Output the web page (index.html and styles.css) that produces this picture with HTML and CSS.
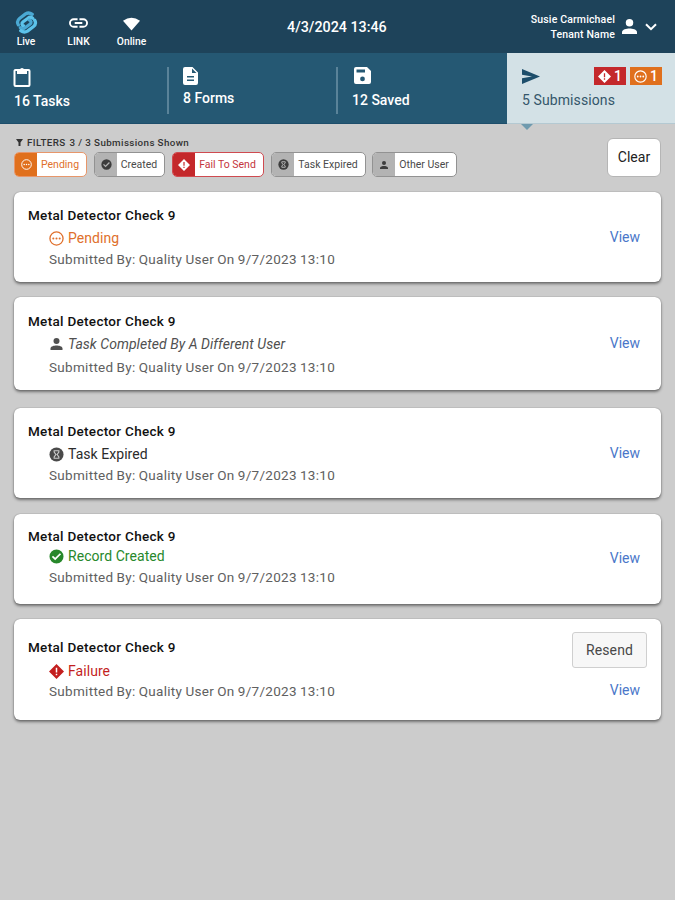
FILE: index.html
```html
<!DOCTYPE html>
<html lang="en">
<head>
    <meta charset="UTF-8">
    <title>Submissions</title>
    <link rel="stylesheet" href="styles.css">
</head>
<body>
<svg class="icon-defs" width="0" height="0">
    <symbol id="person" viewBox="0 0 16 16">
        <circle cx="8" cy="4" r="4"/>
        <path d="M0 16v-2c0-3 5-4 8-4s8 1 8 4v2z"/>
    </symbol>
    <symbol id="pending" viewBox="0 0 16 16">
        <circle cx="8" cy="8" r="7" fill="none" stroke="currentColor" stroke-width="1.4"/>
        <circle cx="4.6" cy="8" r="1.1"/>
        <circle cx="8" cy="8" r="1.1"/>
        <circle cx="11.4" cy="8" r="1.1"/>
    </symbol>
    <symbol id="check" viewBox="0 0 16 16">
        <path fill-rule="evenodd" d="M8 .5a7.500 7.500 0 1 0 0 15a7.500 7.500 0 1 0 0-15zM6.600 12L3 8.400l1.300-1.300 2.300 2.300 5-5 1.300 1.300z"/>
    </symbol>
    <symbol id="fail" viewBox="0 0 16 16">
        <path fill-rule="evenodd" d="M8 0l8 8-8 8-8-8zM7.200 4v5h1.600V4zM7.200 10.300v1.600h1.600v-1.600z"/>
    </symbol>
    <symbol id="expired" viewBox="0 0 16 16">
        <circle cx="8" cy="8" r="7.500"/>
        <path d="M5.500 4h5v1.500L8.700 8l1.800 2.500V12h-5v-1.500L7.300 8 5.500 5.500z" fill="none" stroke="#ccc" stroke-width="1.200"/>
    </symbol>
</svg>

<header class="top-bar">
    <div class="status-item live">
        <svg class="logo line-icon" viewBox="0 0 24 24" stroke-width="3.400" stroke-linejoin="round" stroke-linecap="round">
            <path d="M3.500 14.500C2 12 2.500 9.500 5 7.500l6-4.500c2.500-1.500 5-1 7 .5" stroke="#4aa9d4"/>
            <path d="M18.500 7.500c-2-1.500-3.500-1.200-5 0l-5 3.700c-2 1.500-1.500 4 .5 4.300" stroke="#5cc3ea"/>
            <path d="M5.500 17.500c2 1.500 3.500 1.200 5 0l5-3.700c2-1.500 1.500-4-.5-4.300" stroke="#4aa9d4"/>
            <path d="M20.500 9.500c1.500 2.500 1 5-1.500 7l-6 4.500c-2.500 1.500-5 1-7-.5" stroke="#5cc3ea"/>
        </svg>
        <span>Live</span>
    </div>
    <div class="status-item link">
        <svg class="link-icon line-icon" viewBox="0 0 20 10" stroke="#fff" stroke-width="2">
            <path d="M9 1H5a4 4 0 0 0 0 8h4M11 1h4a4 4 0 0 1 0 8h-4M6 5h8"/>
        </svg>
        <span>LINK</span>
    </div>
    <div class="status-item online">
        <svg class="wifi-icon" viewBox="0 0 18 14"><path d="M0 3.500Q9-3 18 3.500L9 14z"/></svg>
        <span>Online</span>
    </div>
    <div class="clock">4/3/2024 13:46</div>
    <div class="user">
        <div class="user-names">
            <div>Susie Carmichael</div>
            <div>Tenant Name</div>
        </div>
        <svg class="user-icon"><use href="#person"/></svg>
        <svg class="chevron line-icon" viewBox="0 0 12 8" stroke="#fff" stroke-width="2"><path d="M1 1.200l5 5 5-5"/></svg>
    </div>
</header>

<nav class="tabs">
    <div class="tab tasks">
        <svg class="tab-icon" width="18" height="20" viewBox="0 0 18 20">
            <path fill="none" stroke="#fff" stroke-width="2" d="M2.500 3h13a1 1 0 0 1 1 1v14a1 1 0 0 1-1 1h-13a1 1 0 0 1-1-1V4a1 1 0 0 1 1-1z"/>
            <path fill="#fff" d="M4 3h3a2 2 0 0 1 4 0h3v4H4z"/>
        </svg>
        <span>16 Tasks</span>
    </div>
    <div class="tab forms">
        <svg class="tab-icon" width="15" height="18" viewBox="0 0 15 18">
            <path fill="#fff" fill-rule="evenodd" d="M2 0h7.500L15 5.500V16a2 2 0 0 1-2 2H2a2 2 0 0 1-2-2V2a2 2 0 0 1 2-2zM9 1.500V6h4.500zM4 9v1.500h7V9zM4 12.500V14h7v-1.500z"/>
        </svg>
        <span>8 Forms</span>
    </div>
    <div class="tab saved">
        <svg class="tab-icon" width="17" height="17" viewBox="0 0 17 17">
            <path fill="#fff" fill-rule="evenodd" d="M2 0h11l4 4v11a2 2 0 0 1-2 2H2a2 2 0 0 1-2-2V2a2 2 0 0 1 2-2zM2.500 2.500V5.500h8.500V2.500zM8.500 9.500a2.400 2.400 0 1 0 0 4.800a2.400 2.400 0 1 0 0-4.800z"/>
        </svg>
        <span>12 Saved</span>
    </div>
    <div class="tab submissions active">
        <div class="tab-head">
            <svg width="18" height="15" viewBox="0 0 18 15"><path fill="#1d4e6b" d="M0 0l18 7.500L0 15V9.300l10-1.800L0 5.700z"/></svg>
            <div class="badges">
                <span class="badge red"><svg><use href="#fail"/></svg>1</span>
                <span class="badge orange"><svg><use href="#pending"/></svg>1</span>
            </div>
        </div>
        <span>5 Submissions</span>
    </div>
</nav>

<section class="filters">
    <div class="filter-main">
        <div class="filter-title">
            <svg width="7" height="7" viewBox="0 0 7 7"><path d="M0 0h7L4.500 3.500V7h-2V3.500z"/></svg>
            <span>FILTERS</span>
            <span>3 / 3 Submissions Shown</span>
        </div>
        <div class="chips">
            <div class="chip chip-pending"><i><svg><use href="#pending"/></svg></i><span>Pending</span></div>
            <div class="chip chip-created"><i><svg><use href="#check"/></svg></i><span>Created</span></div>
            <div class="chip chip-fail"><i><svg><use href="#fail"/></svg></i><span>Fail To Send</span></div>
            <div class="chip chip-expired"><i><svg><use href="#expired"/></svg></i><span>Task Expired</span></div>
            <div class="chip chip-other"><i><svg><use href="#person"/></svg></i><span>Other User</span></div>
        </div>
    </div>
    <button class="clear-button">Clear</button>
</section>

<main class="submission-list">
    <div class="card card-pending">
        <div class="card-details">
            <h3 class="card-title">Metal Detector Check 9</h3>
            <div class="card-status"><svg><use href="#pending"/></svg><span>Pending</span></div>
            <p class="card-meta">Submitted By: <span>Quality User</span> <span>On 9/7/2023 13:10</span></p>
        </div>
        <div class="card-actions"><a class="view-link">View</a></div>
    </div>
    <div class="card card-other">
        <div class="card-details">
            <h3 class="card-title">Metal Detector Check 9</h3>
            <div class="card-status"><svg><use href="#person"/></svg><span>Task Completed By A Different User</span></div>
            <p class="card-meta">Submitted By: <span>Quality User</span> <span>On 9/7/2023 13:10</span></p>
        </div>
        <div class="card-actions"><a class="view-link">View</a></div>
    </div>
    <div class="card card-expired">
        <div class="card-details">
            <h3 class="card-title">Metal Detector Check 9</h3>
            <div class="card-status"><svg><use href="#expired"/></svg><span>Task Expired</span></div>
            <p class="card-meta">Submitted By: <span>Quality User</span> <span>On 9/7/2023 13:10</span></p>
        </div>
        <div class="card-actions"><a class="view-link">View</a></div>
    </div>
    <div class="card card-created">
        <div class="card-details">
            <h3 class="card-title">Metal Detector Check 9</h3>
            <div class="card-status"><svg><use href="#check"/></svg><span>Record Created</span></div>
            <p class="card-meta">Submitted By: <span>Quality User</span> <span>On 9/7/2023 13:10</span></p>
        </div>
        <div class="card-actions"><a class="view-link">View</a></div>
    </div>
    <div class="card card-failure">
        <div class="card-details">
            <h3 class="card-title">Metal Detector Check 9</h3>
            <div class="card-status"><svg><use href="#fail"/></svg><span>Failure</span></div>
            <p class="card-meta">Submitted By: <span>Quality User</span> <span>On 9/7/2023 13:10</span></p>
        </div>
        <div class="card-actions">
            <button class="resend-button">Resend</button>
            <a class="view-link">View</a>
        </div>
    </div>
</main>
</body>
</html>
```
FILE: styles.css
```css
* {
    box-sizing: border-box;
}

body {
    margin: 0;
    height: 900px;
    background: #cccccc;
    font-family: Roboto, "Liberation Sans", sans-serif;
    overflow: hidden;
}

svg {
    display: block;
    flex: none;
    fill: currentColor;
}

.line-icon {
    fill: none;
}

.icon-defs {
    position: absolute;
}

/* header */
.top-bar {
    display: grid;
    grid-template-columns: 52px 53px 53px 1fr auto;
    height: 53px;
    background: #1e435a;
    color: #fff;
}

.status-item {
    display: flex;
    flex-direction: column;
    align-items: center;
    justify-content: flex-end;
    padding-bottom: 5px;
    font-size: 10.3px;
    font-weight: 500;
    line-height: 12px;
}

.logo {
    width: 23px;
    height: 23px;
    margin-bottom: 2px;
}

.link-icon {
    width: 19px;
    height: 10px;
    margin-bottom: 8px;
}

.wifi-icon {
    width: 17px;
    height: 14px;
    margin-bottom: 5px;
}

.clock {
    padding: 18px 0 0 129px;
    font-size: 14.3px;
    font-weight: 500;
    line-height: 18px;
}

.user {
    display: flex;
    align-items: center;
    padding-right: 18px;
}

.user-names {
    font-size: 10.5px;
    font-weight: 500;
    line-height: 15px;
    letter-spacing: 0.15px;
    text-align: right;
}

.user-icon {
    width: 15px;
    height: 15px;
    margin-left: 7px;
}

.chevron {
    width: 12px;
    height: 8px;
    margin-left: 8px;
}

/* tabs */
.tabs {
    display: grid;
    grid-template-columns: 168px 169px 170px 168px;
    height: 71px;
    background: #255873;
    border-bottom: 1px solid #1d4e6b;
    color: #fff;
    font-size: 14px;
    font-weight: 500;
    line-height: 18px;
}

.tab {
    position: relative;
    display: flex;
    flex-direction: column;
    padding: 14px 0 0 14px;
}

.forms::before,
.saved::before {
    content: "";
    position: absolute;
    left: -1px;
    top: 14px;
    width: 2px;
    height: 47px;
    background: #5a8399;
}

.tasks .tab-icon {
    margin: 0 0 5px -1px;
}

.forms .tab-icon {
    margin-bottom: 4px;
}

.saved .tab-icon {
    margin: 0 0 7px 2px;
}

.forms {
    padding-left: 15px;
}

.saved {
    padding-left: 15px;
}

.active {
    height: 71px;
    padding: 14px 13px 0 15px;
    background: #d3e1e6;
    border-bottom: 1px solid #b4c9d2;
    color: #34566a;
    font-weight: 400;
    letter-spacing: 0.1px;
}

.active::after {
    content: "";
    position: absolute;
    left: 14px;
    top: 71px;
    border: 6px solid transparent;
    border-top-color: #6f9aae;
    border-bottom: 0;
}

.tab-head {
    display: flex;
    align-items: center;
    justify-content: space-between;
    height: 18px;
    margin-bottom: 6px;
}

.badges {
    display: flex;
    gap: 4px;
}

.badge {
    display: flex;
    align-items: center;
    gap: 3px;
    width: 32px;
    height: 18px;
    padding-left: 4px;
    color: #fff;
    font-weight: 500;
    letter-spacing: 0;
}

.badge svg {
    width: 13px;
    height: 13px;
}

.red {
    background: #c4282b;
}

.orange {
    background: #e0701d;
}

/* filters */
.filters {
    display: flex;
    justify-content: space-between;
    height: 68px;
    padding: 11px 14px 0 14px;
}

.filter-title {
    display: flex;
    align-items: center;
    gap: 4px;
    height: 14px;
    padding-left: 2px;
    color: #333;
    font-size: 9.8px;
    letter-spacing: 0.38px;
}

.filter-title span {
    font-weight: 500;
}

.chips {
    display: flex;
    margin-top: 3px;
}

.chip {
    display: flex;
    height: 25px;
    border: 1px solid #929292;
    border-radius: 5px;
    background: #fff;
    color: #4a4a4a;
    font-size: 10.5px;
    overflow: hidden;
}

.chip i {
    display: flex;
    align-items: center;
    justify-content: center;
    width: 22px;
    background: #b3b3b3;
    color: #3d3d3d;
}

.chip span {
    flex: 1;
    padding-right: 3px;
    line-height: 23px;
    text-align: center;
    white-space: nowrap;
}

.chip svg {
    width: 11px;
    height: 11px;
}

.chip-pending {
    width: 73px;
    margin-right: 7px;
    border-color: #e7966a;
    color: #e0702c;
}

.chip-pending i {
    background: #e0701d;
    color: #fff;
}

.chip-created {
    width: 71px;
    margin-right: 7px;
}

.chip-fail {
    width: 92px;
    margin-right: 7px;
    border-color: #cf4a50;
    color: #c4353d;
}

.chip-fail i {
    background: #c4282b;
    color: #fff;
}

.chip-fail svg {
    width: 12px;
    height: 12px;
}

.chip-expired {
    width: 95px;
    margin-right: 6px;
}

.chip-other {
    width: 85px;
}

.chip-other svg {
    width: 8px;
    height: 8px;
}

.clear-button {
    width: 54px;
    height: 39px;
    margin-top: 3px;
    padding: 0 0 2px;
    border: 1px solid #b5b5b5;
    border-radius: 6px;
    background: #fff;
    color: #222;
    font: 14px Roboto, sans-serif;
}

/* submission cards */
.submission-list {
    display: flex;
    flex-direction: column;
    padding: 0 14px;
}

.card {
    display: flex;
    justify-content: space-between;
    height: 90px;
    padding: 13px 14px 0;
    border-radius: 6px;
    background: #fff;
    box-shadow: 0 2px 3px rgba(0, 0, 0, 0.45), 0 0 1px rgba(0, 0, 0, 0.5);
}

.card-title {
    margin: 0;
    color: #111;
    font-size: 13.5px;
    font-weight: 500;
    line-height: 20px;
    letter-spacing: 0.3px;
}

.card-status {
    display: flex;
    align-items: center;
    gap: 4px;
    height: 20px;
    margin: 3px 0 1px 21px;
    font-size: 14px;
    letter-spacing: 0.05px;
}

.card-status svg {
    width: 15px;
    height: 15px;
}

.card-meta {
    margin: 0 0 0 21px;
    color: #606060;
    font-size: 13.5px;
    line-height: 20px;
    letter-spacing: 0.3px;
    word-spacing: -0.5px;
}

.card-actions {
    display: flex;
    flex-direction: column;
    align-items: flex-end;
    padding: 22px 7px 0 0;
}

.view-link {
    color: #4a77c9;
    font-size: 14px;
    line-height: 20px;
}

.card-pending {
    margin-bottom: 15px;
}

.card-pending .card-status {
    color: #e0702c;
}

.card-other {
    height: 93px;
    margin-bottom: 18px;
    padding-top: 14px;
}

.card-other .card-status {
    margin-bottom: 3px;
    color: #505050;
    font-style: italic;
}

.card-other .card-status svg {
    width: 13px;
    height: 12px;
    margin: 0 1px;
}

.card-expired {
    margin-bottom: 16px;
}

.card-expired .card-status {
    color: #2b2b2b;
}

.card-expired .card-status svg {
    color: #4a4a4a;
}

.card-created {
    margin-bottom: 15px;
}

.card-created .card-details {
    margin-top: -1px;
}

.card-created .card-status {
    margin-top: 0;
    color: #27882b;
}

.card-created .card-actions {
    padding-top: 21px;
}

.card-failure {
    height: 101px;
    padding-top: 13px;
}

.card-failure .card-details {
    padding-top: 5px;
}

.card-failure .card-status {
    margin-top: 4px;
    margin-bottom: 0;
    color: #c31f1f;
}

.card-failure .card-actions {
    padding-top: 0;
    padding-right: 0;
}

.card-failure .view-link {
    margin: 12px 7px 0 0;
}

.resend-button {
    width: 75px;
    height: 36px;
    padding: 0;
    border: 1px solid #cfcfcf;
    border-radius: 3px;
    background: #f7f7f7;
    color: #484848;
    font: 14px Roboto, sans-serif;
    letter-spacing: 0.1px;
}
```
